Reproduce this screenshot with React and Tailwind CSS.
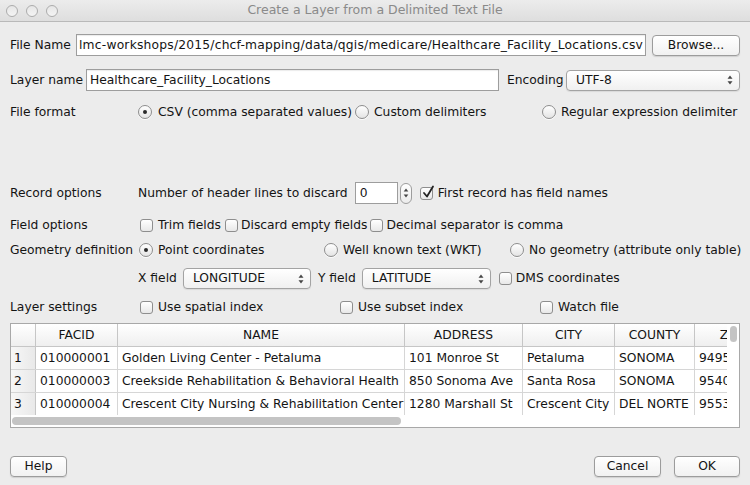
import React from "react";

function Radio({ checked }) {
  return (
    <span className="w-[14px] h-[14px] rounded-full border border-[#8e8e8e] bg-gradient-to-b from-white to-[#e4e4e4] flex items-center justify-center shrink-0 shadow-[0_1px_0_rgba(255,255,255,0.8)]">
      {checked && <span className="w-[4px] h-[4px] rounded-full bg-[#2a2a2a]" />}
    </span>
  );
}

function Check({ checked }) {
  return (
    <span className="relative w-[13px] h-[13px] rounded-[3px] border border-[#8e8e8e] bg-gradient-to-b from-white to-[#e8e8e8] shrink-0">
      {checked && (
        <svg className="absolute left-[1px] top-[-3px]" width="13" height="14" viewBox="0 0 13 14">
          <path d="M2 8 L5 11.5 L11 1.5" fill="none" stroke="#222" strokeWidth="1.8" strokeLinecap="round" strokeLinejoin="round" />
        </svg>
      )}
    </span>
  );
}

function Arrows() {
  return (
    <svg width="6" height="10" viewBox="0 0 6 10" className="shrink-0">
      <path d="M3 0.5 L5.5 3.8 L0.5 3.8 Z" fill="#444" />
      <path d="M3 9.5 L5.5 6.2 L0.5 6.2 Z" fill="#444" />
    </svg>
  );
}

function Select({ value, w }) {
  return (
    <div className={`${w} h-[21px] rounded-[4px] border border-[#a3a3a3] bg-gradient-to-b from-white to-[#f0f0f0] flex items-center pl-[9px] pr-[6px] shadow-[0_1px_1px_rgba(0,0,0,0.08)]`}>
      <span className="flex-1">{value}</span>
      <Arrows />
    </div>
  );
}

function Button({ children, w }) {
  return (
    <div className={`${w} h-[21px] rounded-[4px] border border-[#9c9c9c] bg-gradient-to-b from-white to-[#f1f1f1] flex items-center justify-center shadow-[0_1px_1px_rgba(0,0,0,0.12)]`}>
      {children}
    </div>
  );
}

const cols = [
  { w: "w-[82px]", name: "FACID" },
  { w: "w-[287px]", name: "NAME" },
  { w: "w-[118px]", name: "ADDRESS" },
  { w: "w-[92px]", name: "CITY" },
  { w: "w-[80px]", name: "COUNTY" },
  { w: "w-[70px]", name: "ZIP" },
];

const rows = [
  ["010000001", "Golden Living Center - Petaluma", "101 Monroe St", "Petaluma", "SONOMA", "94952"],
  ["010000003", "Creekside Rehabilitation & Behavioral Health", "850 Sonoma Ave", "Santa Rosa", "SONOMA", "95404"],
  ["010000004", "Crescent City Nursing & Rehabilitation Center", "1280 Marshall St", "Crescent City", "DEL NORTE", "95531"],
];

export default function App() {
  return (
    <div className="w-[750px] h-[485px] overflow-hidden bg-[#ececec] font-['DejaVu_Sans',sans-serif] text-[12.3px] text-[#141414] flex flex-col whitespace-nowrap">
      {/* Title bar */}
      <div className="h-[22px] shrink-0 flex items-center border-b border-[#b9b9b9] bg-gradient-to-b from-[#ececec] to-[#dedede]">
        <div className="w-[70px] flex gap-[8px] pl-[6px]">
          <span className="w-[12px] h-[12px] rounded-full border border-[#acacac] bg-gradient-to-b from-[#e6e6e6] to-[#f4f4f4]" />
          <span className="w-[12px] h-[12px] rounded-full border border-[#acacac] bg-gradient-to-b from-[#e6e6e6] to-[#f4f4f4]" />
          <span className="w-[12px] h-[12px] rounded-full border border-[#acacac] bg-gradient-to-b from-[#e6e6e6] to-[#f4f4f4]" />
        </div>
        <div className="flex-1 text-center text-[#8a8a8a] text-[12.5px]">Create a Layer from a Delimited Text File</div>
        <div className="w-[70px]" />
      </div>

      {/* File name */}
      <div className="mt-[12px] h-[22px] px-[10px] flex items-center">
        <span className="w-[66px] shrink-0">File Name</span>
        <div className="w-[570px] h-[22px] border border-[#9d9d9d] bg-white flex items-center overflow-hidden pl-[2px] tracking-[0.2px] shadow-[inset_0_1px_1px_rgba(0,0,0,0.08)]">
          lmc-workshops/2015/chcf-mapping/data/qgis/medicare/Healthcare_Facility_Locations.csv
        </div>
        <div className="ml-[6px]">
          <Button w="w-[88px]">Browse...</Button>
        </div>
      </div>

      {/* Layer name */}
      <div className="mt-[13px] h-[22px] px-[10px] flex items-center">
        <span className="w-[76px] shrink-0">Layer name</span>
        <div className="w-[413px] h-[22px] border border-[#9d9d9d] bg-white flex items-center pl-[3px] shadow-[inset_0_1px_1px_rgba(0,0,0,0.08)]">
          Healthcare_Facility_Locations
        </div>
        <span className="ml-[8px] w-[59px]">Encoding</span>
        <Select value="UTF-8" w="w-[174px]" />
      </div>

      {/* File format */}
      <div className="mt-[10px] h-[22px] px-[10px] flex items-center">
        <span className="w-[128px] shrink-0">File format</span>
        <div className="w-[217px] flex items-center gap-[6px]"><Radio checked /><span>CSV (comma separated values)</span></div>
        <div className="w-[187px] flex items-center gap-[5px]"><Radio /><span>Custom delimiters</span></div>
        <div className="flex items-center gap-[5px]"><Radio /><span>Regular expression delimiter</span></div>
      </div>

      {/* Record options */}
      <div className="mt-[59px] h-[22px] px-[10px] flex items-center">
        <span className="w-[128px] shrink-0">Record options</span>
        <span>Number of header lines to discard</span>
        <div className="ml-[7px] w-[43px] h-[22px] border border-[#9d9d9d] bg-white flex items-center pl-[4px]">0</div>
        <div className="ml-[2px] w-[12px] h-[21px] rounded-[6px] border border-[#9d9d9d] bg-gradient-to-b from-white to-[#ececec] flex items-center justify-center">
          <svg width="6" height="12" viewBox="0 0 6 12">
            <path d="M3 1.5 L5.3 4.5 L0.7 4.5 Z" fill="#444" />
            <path d="M3 10.5 L5.3 7.5 L0.7 7.5 Z" fill="#444" />
          </svg>
        </div>
        <div className="ml-[8px] flex items-center gap-[5px]"><Check checked /><span>First record has field names</span></div>
      </div>

      {/* Field options */}
      <div className="mt-[10px] h-[22px] px-[10px] flex items-center">
        <span className="w-[130px] shrink-0">Field options</span>
        <div className="flex items-center gap-[5px]"><Check /><span>Trim fields</span></div>
        <div className="ml-[4px] flex items-center gap-[3px]"><Check /><span>Discard empty fields</span></div>
        <div className="ml-[3px] flex items-center gap-[3px]"><Check /><span>Decimal separator is comma</span></div>
      </div>

      {/* Geometry definition */}
      <div className="mt-[3px] h-[22px] px-[10px] flex items-center">
        <span className="w-[129px] shrink-0">Geometry definition</span>
        <div className="w-[185px] shrink-0 flex items-center gap-[5px]"><Radio checked /><span>Point coordinates</span></div>
        <div className="w-[186px] shrink-0 flex items-center gap-[5px]"><Radio /><span>Well known text (WKT)</span></div>
        <div className="shrink-0 flex items-center gap-[5px]"><Radio /><span>No geometry (attribute only table)</span></div>
      </div>

      {/* X / Y field */}
      <div className="mt-[7px] h-[21px] px-[10px] flex items-center">
        <span className="w-[128px] shrink-0" />
        <span>X field</span>
        <div className="ml-[6px]"><Select value="LONGITUDE" w="w-[128px]" /></div>
        <span className="ml-[7px]">Y field</span>
        <div className="ml-[6px]"><Select value="LATITUDE" w="w-[129px]" /></div>
        <div className="ml-[8px] flex items-center gap-[4px]"><Check /><span>DMS coordinates</span></div>
      </div>

      {/* Layer settings */}
      <div className="mt-[7px] h-[22px] px-[10px] flex items-center">
        <span className="w-[130px] shrink-0">Layer settings</span>
        <div className="w-[200px] flex items-center gap-[5px]"><Check /><span>Use spatial index</span></div>
        <div className="w-[200px] flex items-center gap-[5px]"><Check /><span>Use subset index</span></div>
        <div className="flex items-center gap-[5px]"><Check /><span>Watch file</span></div>
      </div>

      {/* Table */}
      <div className="mx-[10px] mt-[5px] h-[105px] shrink-0 border border-[#a8a8a8] bg-white flex flex-col">
        <div className="flex flex-1 min-h-0">
          <div className="flex-1 overflow-hidden">
            <div className="flex h-[23px] border-b border-[#c6c6c6] bg-gradient-to-b from-white to-[#efefef]">
              <div className="w-[25px] shrink-0 border-r border-[#c6c6c6]" />
              {cols.map((c) => (
                <div key={c.name} className={`${c.w} shrink-0 border-r border-[#c6c6c6] flex items-center justify-center`}>
                  {c.name}
                </div>
              ))}
            </div>
            {rows.map((r, i) => (
              <div key={i} className="flex h-[23px] border-b border-[#d6d6d6]">
                <div className="w-[25px] shrink-0 border-r border-[#c6c6c6] bg-gradient-to-r from-[#f7f7f7] to-[#e9e9e9] flex items-center pl-[3px]">
                  {i + 1}
                </div>
                {r.map((v, j) => (
                  <div key={j} className={`${cols[j].w} shrink-0 border-r border-[#d6d6d6] flex items-center pl-[4px] overflow-hidden`}>
                    {v}
                  </div>
                ))}
              </div>
            ))}
          </div>
          <div className="w-[12px] shrink-0 bg-white pt-[2px] pl-[3px]">
            <div className="w-[7px] h-[16px] rounded-full bg-[#c4c4c4]" />
          </div>
        </div>
        <div className="h-[12px] shrink-0 flex items-center pl-[1px] pr-[12px]">
          <div className="w-[389px] h-[8px] rounded-full bg-[#c4c4c4]" />
        </div>
      </div>

      {/* Buttons */}
      <div className="mt-[28px] px-[10px] flex items-center">
        <Button w="w-[57px]">Help</Button>
        <div className="flex-1" />
        <Button w="w-[67px]">Cancel</Button>
        <div className="ml-[13px]"><Button w="w-[66px]">OK</Button></div>
      </div>
    </div>
  );
}
